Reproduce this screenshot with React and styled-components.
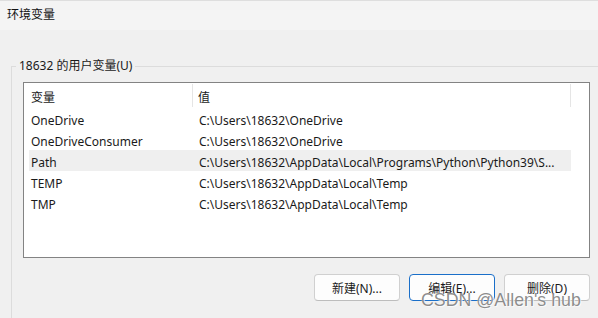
import React from "react";
import styled, { createGlobalStyle } from "styled-components";

const variables = [
  { name: "OneDrive", value: "C:\\Users\\18632\\OneDrive" },
  { name: "OneDriveConsumer", value: "C:\\Users\\18632\\OneDrive" },
  {
    name: "Path",
    value: "C:\\Users\\18632\\AppData\\Local\\Programs\\Python\\Python39\\S...",
    hover: true,
  },
  { name: "TEMP", value: "C:\\Users\\18632\\AppData\\Local\\Temp" },
  { name: "TMP", value: "C:\\Users\\18632\\AppData\\Local\\Temp" },
];

const GlobalStyle = createGlobalStyle`
  html, body {
    margin: 0;
    padding: 0;
    background: #f0f0f0;
  }
  body {
    font-family: "Segoe UI", "Noto Sans", "Noto Sans CJK SC", sans-serif;
    font-size: 12px;
    color: #1a1a1a;
  }
`;

export default function App() {
  return (
    <>
      <GlobalStyle />
      <Window>
        <TitleBar>环境变量</TitleBar>
        <Content>
          <GroupBox>
            <legend>18632 的用户变量(U)</legend>
            <ListView>
              <Header>
                <HeaderCell $width={169}>变量</HeaderCell>
                <HeaderCell $width={378} $pad={5}>值</HeaderCell>
              </Header>
              <Rows>
                {variables.map((v) => (
                  <Row key={v.name} $hover={v.hover}>
                    <NameCell>{v.name}</NameCell>
                    <ValueCell>{v.value}</ValueCell>
                  </Row>
                ))}
              </Rows>
            </ListView>
            <ButtonBar>
              <Button>新建(N)...</Button>
              <Button $focused>编辑(E)...</Button>
              <Button>删除(D)</Button>
            </ButtonBar>
          </GroupBox>
        </Content>
        <Watermark>CSDN @Allen's hub</Watermark>
      </Window>
    </>
  );
}

const Window = styled.div`
  position: relative;
  width: 598px;
  height: 318px;
  overflow: hidden;
  display: flex;
  flex-direction: column;
  background: #f0f0f0;
`;

const TitleBar = styled.div`
  height: 30px;
  flex: none;
  box-sizing: border-box;
  display: flex;
  align-items: center;
  padding: 0 0 3px 7px;
  background: #f4f4f4;
  border-top: 1px solid #dedede;
  font-size: 12px;
  color: #111;
`;

const Content = styled.div`
  padding: 28px 0 0 11px;
`;

const GroupBox = styled.fieldset`
  margin: 0;
  padding: 0 0 0 4px;
  border: 1px solid #dcdcdc;
  border-right: none;
  border-bottom: none;
  min-width: 0;

  legend {
    padding: 0 3px;
    margin: 0;
    line-height: 16px;
    font-size: 12px;
    color: #1a1a1a;
  }
`;

const ListView = styled.div`
  margin: 8px 0 0 7px;
  width: 567px;
  height: 176px;
  box-sizing: border-box;
  border: 1px solid #838383;
  background: #ffffff;
  display: flex;
  flex-direction: column;
`;

const Header = styled.div`
  height: 25px;
  display: flex;
`;

const HeaderCell = styled.div`
  width: ${(p) => p.$width}px;
  box-sizing: border-box;
  padding-left: ${(p) => p.$pad ?? 7}px;
  padding-top: 3px;
  display: flex;
  align-items: center;
  position: relative;

  &::after {
    content: "";
    position: absolute;
    right: 0;
    top: 1px;
    bottom: 1px;
    width: 1px;
    background: #e5e5e5;
  }
`;

const Rows = styled.div`
  display: flex;
  flex-direction: column;
  padding-left: 5px;
  width: 542px;
`;

const Row = styled.div`
  height: 21px;
  box-sizing: border-box;
  padding-top: 3px;
  display: flex;
  align-items: center;
  background: ${(p) => (p.$hover ? "#efefef" : "transparent")};
`;

const NameCell = styled.div`
  width: 164px;
  box-sizing: border-box;
  padding-left: 2px;
  white-space: nowrap;
`;

const ValueCell = styled.div`
  flex: 1;
  padding-left: 6px;
  white-space: nowrap;
  overflow: hidden;
`;

const ButtonBar = styled.div`
  display: flex;
  justify-content: flex-end;
  gap: 9px;
  width: 574px;
  margin-top: 16px;
  padding-bottom: 20px;
`;

const Button = styled.button`
  width: 86px;
  height: 27px;
  box-sizing: border-box;
  background: #fdfdfd;
  border: 1px solid ${(p) => (p.$focused ? "#1a6fc9" : "#d0d0d0")};
  border-bottom-color: ${(p) => (p.$focused ? "#1a6fc9" : "#bdbdbd")};
  border-radius: 4px;
  font-family: "Segoe UI", "Noto Sans", "Noto Sans CJK SC", sans-serif;
  font-size: 12px;
  color: #1a1a1a;
  padding: 0;
`;

const Watermark = styled.div`
  position: absolute;
  left: 421px;
  top: 290px;
  font-family: "Liberation Sans", Arial, sans-serif;
  font-size: 17.8px;
  color: rgba(120, 120, 120, 0.85);
  text-shadow: 0 0 1px #fff, 1px 1px 0 rgba(255, 255, 255, 0.7);
  white-space: nowrap;
  pointer-events: none;
`;
